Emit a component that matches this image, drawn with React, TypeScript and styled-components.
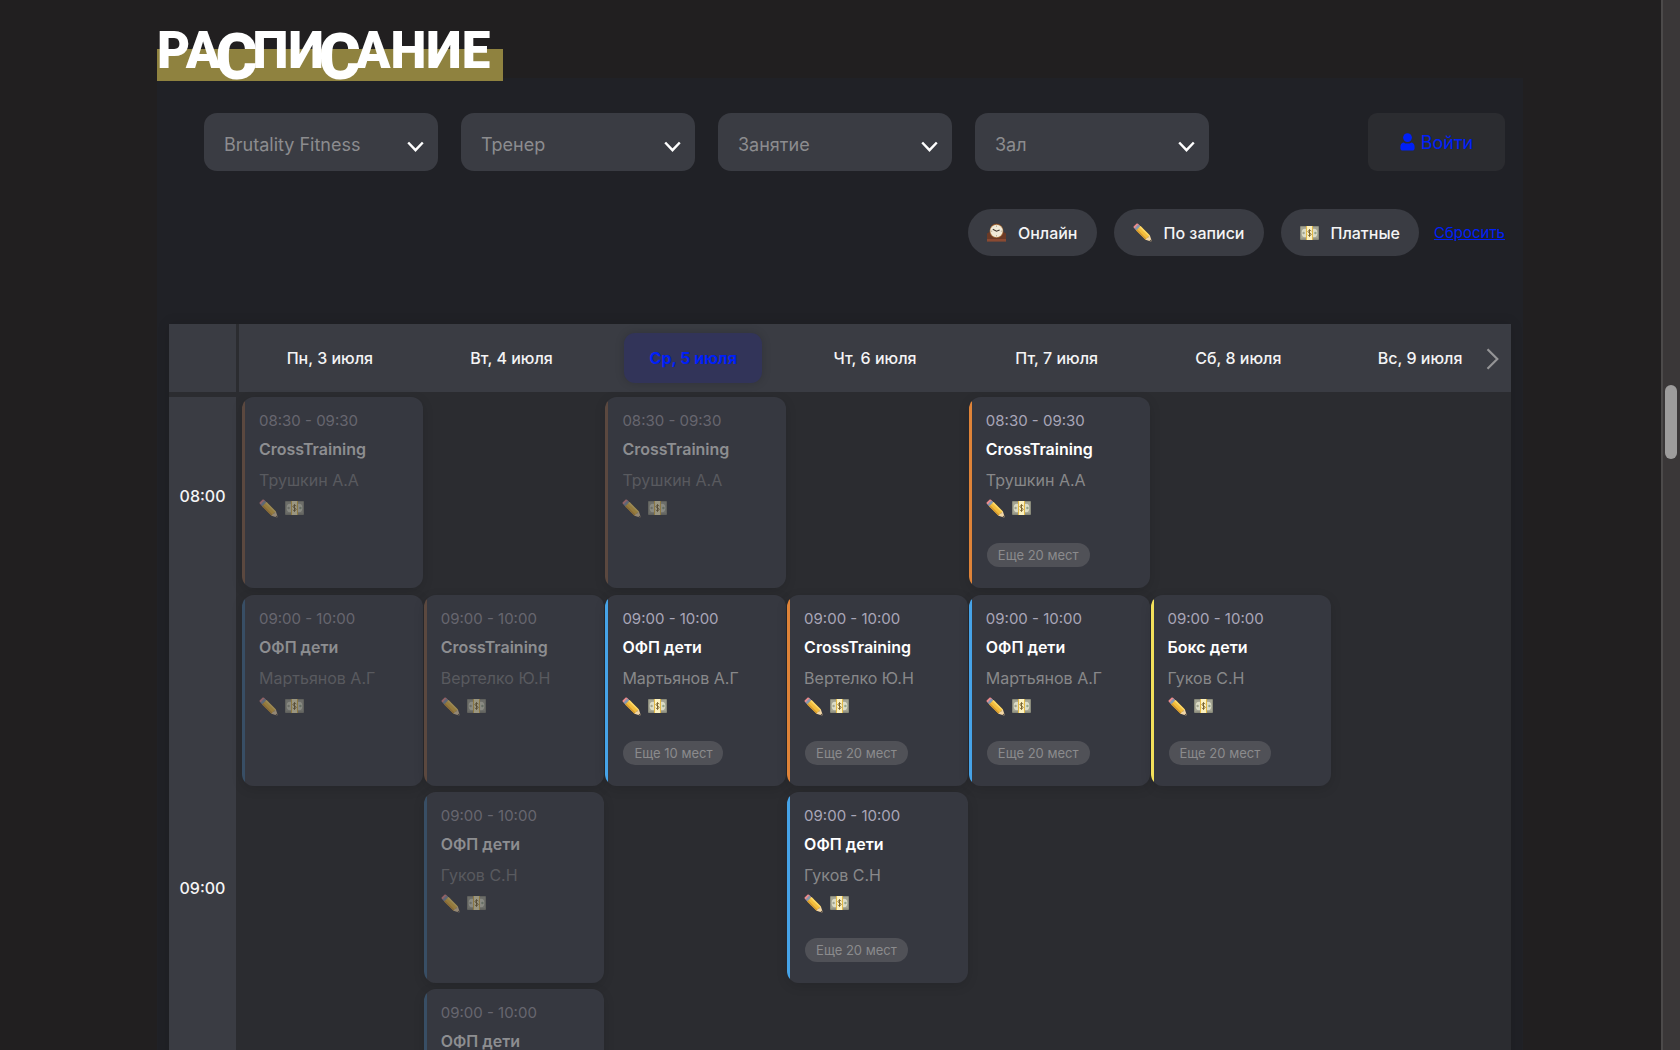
import React from "react";
import styled, { createGlobalStyle } from "styled-components";

const GlobalStyle = createGlobalStyle`
  *, *::before, *::after { box-sizing: border-box; }
  html, body { margin: 0; background: #211f20; }
  body, button, select { font-family: Inter, Roboto, "Liberation Sans", sans-serif; }
`;

const BLUE = "#0020f8";

const Page = styled.div`
  height: 100vh;
  overflow: hidden;
  color: #f4f4f5;
`;

const Container = styled.main`
  max-width: 1366px;
  margin: 0 auto;
  padding-top: 24px;
`;

const Title = styled.h1`
  position: relative;
  width: fit-content;
  height: 57px;
  margin: 0 0 -3px;
  padding-right: 13px;
  background: linear-gradient(to bottom, transparent 25px, #8f823f 25px);
  color: #fff;
  font-family: Roboto, "Liberation Sans", sans-serif;
  font-size: 51px;
  font-weight: 900;
  line-height: 54px;
  white-space: nowrap;
`;

const DropLetter = styled.span`
  margin: 0 -5px;
  font-size: 64px;
  line-height: 0;
  vertical-align: -11px;
`;

const Panel = styled.section`
  padding: 35px 12px 0;
  background: #202126;
`;

const Filters = styled.div`
  display: flex;
  gap: 23px;
  height: 58px;
  margin: 0 6px 0 35px;
`;

const SelectBox = styled.label`
  display: grid;
  width: 234px;
  align-items: center;

  & > * { grid-area: 1 / 1; }
  & > svg { justify-self: end; margin: 8px 14px 0 0; pointer-events: none; }
`;

const Select = styled.select`
  appearance: none;
  width: 100%;
  height: 58px;
  padding: 4px 40px 0 20px;
  border: 0;
  border-radius: 13px;
  background: #3a3c43;
  color: #8c8c8f;
  font-size: 18px;
`;

const Login = styled.button`
  display: flex;
  align-items: center;
  justify-content: center;
  gap: 6px;
  width: 137px;
  margin-left: auto;
  border: 0;
  border-radius: 9px;
  background: #2b2c30;
  color: ${BLUE};
  font-size: 18px;
`;

const Toggles = styled.div`
  display: flex;
  align-items: center;
  justify-content: flex-end;
  gap: 17px;
  margin: 38px 6px 68px 0;
`;

const Toggle = styled.button`
  display: flex;
  align-items: center;
  gap: 12px;
  height: 47px;
  padding: 0 19px;
  border: 0;
  border-radius: 24px;
  background: #3a3c43;
  color: #f4f4f5;
  font-size: 16px;
  font-weight: 500;
`;

const Reset = styled.a`
  margin-left: -2px;
  color: ${BLUE};
  font-size: 15px;
`;

const Table = styled.table`
  width: 100%;
  table-layout: fixed;
  border-spacing: 0;
  background: #2b2c30;
  box-shadow: 0 0 12px rgba(0, 0, 0, 0.12);
`;

const Corner = styled.td`
  width: 70px;
  padding: 0;
  border-right: 3px solid #2b2c30;
  border-bottom: 5px solid #2b2c30;
  background: #3a3c43;
`;

const DayCell = styled.th`
  height: 73px;
  padding: 0;
  border-bottom: 5px solid #2b2c30;
  background: #3a3c43;
  font-size: 16px;
  font-weight: 500;
`;

const Day = styled.div<{ $today?: boolean }>`
  position: relative;
  display: flex;
  align-items: center;
  justify-content: center;
  height: 50px;
  margin: 0 22px;
  border-radius: 11px;
  background: ${(p) => (p.$today ? "#323459" : "none")};
  box-shadow: ${(p) => (p.$today ? "0 0 10px rgba(0, 0, 0, 0.16)" : "none")};
  color: ${(p) => (p.$today ? BLUE : "inherit")};
  font-weight: ${(p) => (p.$today ? 700 : 500)};
`;

const Next = styled.button`
  position: absolute;
  top: 15px;
  right: -10px;
  display: flex;
  padding: 0;
  border: 0;
  background: none;
`;

const Time = styled.th`
  padding: 0;
  border-right: 3px solid #2b2c30;
  background: #3a3c43;
  font-size: 16px;
  font-weight: 500;
`;

const Slot = styled.td<{ $last: boolean }>`
  padding: 0 0 ${(p) => (p.$last ? 0 : 7)}px;
  vertical-align: top;
`;

const Stack = styled.div`
  display: grid;
  gap: 6px;
`;

const Card = styled.article<{ $accent: string }>`
  display: flex;
  flex-direction: column;
  align-items: flex-start;
  gap: 6px;
  height: 191px;
  margin: 0 -2px 0 3px;
  padding: 13px 17px 21px;
  border-radius: 12px;
  background: linear-gradient(to right, ${(p) => p.$accent} 3px, #363840 3px);
  box-shadow: 0 3px 12px rgba(0, 0, 0, 0.12);
`;

const Hours = styled.div<{ $past: boolean }>`
  color: ${(p) => (p.$past ? "#67666f" : "#a9a6b8")};
  font-size: 15px;
  line-height: 21px;
`;

const Name = styled.div<{ $past: boolean }>`
  color: ${(p) => (p.$past ? "#8d8e91" : "#ffffff")};
  font-size: 16px;
  font-weight: 600;
  line-height: 25px;
`;

const Coach = styled.div<{ $past: boolean }>`
  color: ${(p) => (p.$past ? "#595a5f" : "#88888a")};
  font-size: 16px;
  line-height: 25px;
  white-space: nowrap;
`;

const Marks = styled.div<{ $past: boolean }>`
  display: flex;
  align-items: center;
  gap: 7px;
  height: 18px;
  opacity: ${(p) => (p.$past ? 0.5 : 1)};
`;

const Places = styled.div`
  margin: auto 0 0 1px;
  padding: 0 11px;
  border-radius: 12px;
  background: #505157;
  color: #8b8b8d;
  font-size: 13px;
  line-height: 24px;
`;

const ScrollTrack = styled.div`
  position: fixed;
  top: 0;
  right: 0;
  bottom: 0;
  width: 19px;
  padding: 385px 3px 0 2px;
  border-left: 2px solid #4c4a4a;
  background: #3a3738;
`;

const ScrollThumb = styled.div`
  height: 74px;
  border-radius: 7px;
  background: #9d9c9c;
`;

const ChevronDown = () => (
  <svg width="17" height="11" viewBox="0 0 17 11" fill="none" stroke="#fff" strokeWidth="2.4" aria-hidden="true">
    <path d="M1.2 1.5 8.5 9.2 15.8 1.5" />
  </svg>
);

const ChevronRight = () => (
  <svg width="13" height="22" viewBox="0 0 13 22" fill="none" stroke="#949496" strokeWidth="2.2" aria-hidden="true">
    <path d="M1.5 1.2 11.3 11 1.5 20.8" />
  </svg>
);

const UserIcon = () => (
  <svg width="15" height="18" viewBox="0 0 15 18" fill={BLUE} aria-hidden="true">
    <circle cx="7.5" cy="4.6" r="4.4" />
    <path d="M3.6 9.4C5.9 11 9.1 11 11.4 9.4 13.6 9.9 14.6 11.600 14.600 13.800V15.200C14.600 16.600 13.600 17.500 12.300 17.500H2.700C1.400 17.500.4 16.600.4 15.200V13.800C.4 11.600 1.400 9.900 3.600 9.400Z" />
  </svg>
);

const Pencil = () => (
  <svg width="19" height="19" viewBox="0 0 19 19" aria-hidden="true">
    <path d="M.6 3.600 3.700.6Q4.400.2 5 .8L7 2.800 2.800 6.800.8 4.800Q.2 4.200.6 3.600Z" fill="#ec8a8c" />
    <path d="M5.200 1.400 7.800 3.600 3.800 7.700 1.600 5.500Z" fill="#8596ad" />
    <path d="M7.500 3 16.900 12.600 12.500 16.700 3.200 7.400Z" fill="#f3bd3c" />
    <path d="M7.500 3 16.900 12.600 15.900 13.600 6.200 4.200Z" fill="#fbd768" />
    <path d="M4.300 6.200 13.600 15.700 12.500 16.700 3.200 7.400Z" fill="#d59a30" />
    <path d="M16.900 12.600 18.700 18 18 18.600 12.500 16.700 14 14.800 15.200 14.600 15.600 13.400Z" fill="#f2d6a6" />
    <path d="M18.100 16.400 18.700 18.200Q18.600 18.700 18.100 18.600L16.400 18Z" fill="#4c4541" />
  </svg>
);

const Money = () => (
  <svg width="19" height="14" viewBox="0 0 19 14" aria-hidden="true">
    <rect width="19" height="14" rx="1" fill="#8a8b7b" />
    <rect x="1" y="1" width="17" height="11.500" fill="#a3a392" />
    <ellipse cx="5" cy="7" rx="3.300" ry="4.200" fill="#dcdcc6" />
    <ellipse cx="14" cy="7" rx="3.300" ry="4.200" fill="#dcdcc6" />
    <circle cx="3.600" cy="7" r="1.200" fill="#a2a48f" />
    <circle cx="15.400" cy="7" r="1.200" fill="#93a589" />
    <path d="M6 0H13V14H6Z" fill="#e2b846" />
    <path d="M7 0H12V14H7Z" fill="#fbf1c0" />
    <path d="M11.300 5C10.900 4.200 8.200 3.900 8 5.500 7.900 7 11.100 6.700 11.100 8.400 11 10 8.300 9.900 7.800 8.900M9.500 3.200V10.800" fill="none" stroke="#7a6433" strokeWidth="1" />
  </svg>
);

const Clock = () => (
  <svg width="19" height="19" viewBox="0 0 19 19" aria-hidden="true">
    <path d="M0 16.500V10.600L3.300 8.600C3.300 3.500 5.800.6 9.500.6S15.700 3.500 15.700 8.600L19 10.600V16.500Z" fill="#6b3a26" />
    <path d="M0 16H19V18.600H0Z" fill="#8a4a32" />
    <circle cx="9.500" cy="8" r="6.900" fill="#a5703c" />
    <circle cx="9.500" cy="8" r="6.200" fill="#f1ead7" />
    <path d="M5.800 6.300 9.500 8.200 12.600 7" fill="none" stroke="#3f352c" strokeWidth="1.100" />
    <path d="M9.500 2.600V3.800M9.500 12.200V13.400M4.100 8.200H5.200M13.800 8.200H14.900" stroke="#a1957c" strokeWidth=".8" />
  </svg>
);

type Sport = "cross" | "kids" | "box";

type Lesson = {
  hours: string;
  name: string;
  coach: string;
  sport: Sport;
  places?: number;
};

const ACCENT: Record<Sport, [string, string]> = {
  cross: ["#df8338", "#5b483f"],
  kids: ["#46a3e8", "#384e65"],
  box: ["#f3e05a", "#6b6845"],
};

const cross = (hours: string, coach: string, places?: number): Lesson => ({
  hours, name: "CrossTraining", coach, sport: "cross", places,
});
const kids = (coach: string, places?: number): Lesson => ({
  hours: "09:00 - 10:00", name: "ОФП дети", coach, sport: "kids", places,
});

const DAYS = [
  "Пн, 3 июля",
  "Вт, 4 июля",
  "Ср, 5 июля",
  "Чт, 6 июля",
  "Пт, 7 июля",
  "Сб, 8 июля",
  "Вс, 9 июля",
];
const TODAY = 2;

const ROWS: { time: string; days: Lesson[][] }[] = [
  {
    time: "08:00",
    days: [
      [cross("08:30 - 09:30", "Трушкин А.А")],
      [],
      [cross("08:30 - 09:30", "Трушкин А.А")],
      [],
      [cross("08:30 - 09:30", "Трушкин А.А", 20)],
      [],
      [],
    ],
  },
  {
    time: "09:00",
    days: [
      [kids("Мартьянов А.Г")],
      [cross("09:00 - 10:00", "Вертелко Ю.Н"), kids("Гуков С.Н"), kids("Мартьянов А.Г")],
      [kids("Мартьянов А.Г", 10)],
      [cross("09:00 - 10:00", "Вертелко Ю.Н", 20), kids("Гуков С.Н", 20)],
      [kids("Мартьянов А.Г", 20)],
      [{ hours: "09:00 - 10:00", name: "Бокс дети", coach: "Гуков С.Н", sport: "box", places: 20 }],
      [],
    ],
  },
];

const FILTERS = ["Brutality Fitness", "Тренер", "Занятие", "Зал"];

function LessonCard({ lesson }: { lesson: Lesson }) {
  const past = lesson.places === undefined;
  return (
    <Card $accent={ACCENT[lesson.sport][past ? 1 : 0]}>
      <Hours $past={past}>{lesson.hours}</Hours>
      <Name $past={past}>{lesson.name}</Name>
      <Coach $past={past}>{lesson.coach}</Coach>
      <Marks $past={past}>
        <Pencil />
        <Money />
      </Marks>
      {!past && <Places>Еще {lesson.places} мест</Places>}
    </Card>
  );
}

export default function App() {
  return (
    <Page>
      <GlobalStyle />
      <Container>
        <Title>
          РА<DropLetter>С</DropLetter>ПИ<DropLetter>С</DropLetter>АНИЕ
        </Title>
        <Panel>
          <Filters>
            {FILTERS.map((name) => (
              <SelectBox key={name}>
                <Select aria-label={name}>
                  <option>{name}</option>
                </Select>
                <ChevronDown />
              </SelectBox>
            ))}
            <Login type="button">
              <UserIcon />
              Войти
            </Login>
          </Filters>
          <Toggles>
            <Toggle type="button"><Clock />Онлайн</Toggle>
            <Toggle type="button"><Pencil />По записи</Toggle>
            <Toggle type="button"><Money />Платные</Toggle>
            <Reset href="#reset">Сбросить</Reset>
          </Toggles>
          <Table>
            <thead>
              <tr>
                <Corner />
                {DAYS.map((day, i) => (
                  <DayCell key={day} scope="col">
                    <Day $today={i === TODAY}>
                      {day}
                      {i === DAYS.length - 1 && (
                        <Next type="button" aria-label="Следующая неделя">
                          <ChevronRight />
                        </Next>
                      )}
                    </Day>
                  </DayCell>
                ))}
              </tr>
            </thead>
            <tbody>
              {ROWS.map((row, r) => (
                <tr key={row.time}>
                  <Time scope="row">{row.time}</Time>
                  {row.days.map((lessons, d) => (
                    <Slot key={d} $last={r === ROWS.length - 1}>
                      <Stack>
                        {lessons.map((lesson, n) => (
                          <LessonCard key={n} lesson={lesson} />
                        ))}
                      </Stack>
                    </Slot>
                  ))}
                </tr>
              ))}
            </tbody>
          </Table>
        </Panel>
      </Container>
      <ScrollTrack>
        <ScrollThumb />
      </ScrollTrack>
    </Page>
  );
}
